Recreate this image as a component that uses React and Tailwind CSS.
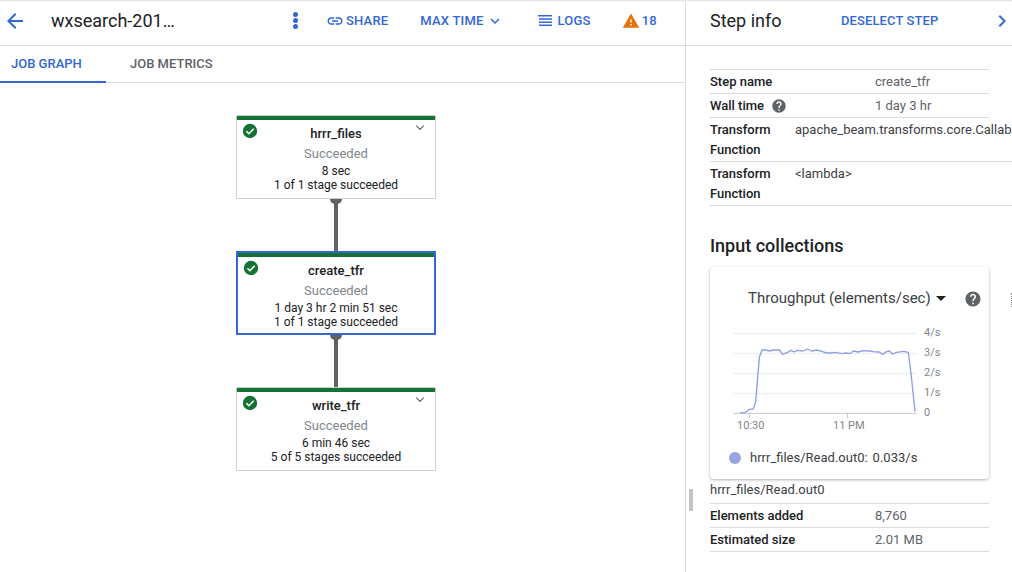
// src/App.jsx
import React from "react";

const roboto = { fontFamily: "Roboto, sans-serif" };

const chartPoints =
  "90,279 105,278 118,268 130,267 137,245 148,112 156,90 168,90 180,93 190,90 208,90 218,103 232,97 243,91 252,96 262,91 278,93 293,87 305,93 320,90 335,94 350,99 362,99 375,97 395,101 407,99 420,101 430,93 445,96 460,92 480,93 490,95 508,96 518,103 530,95 538,93 548,102 560,97 580,94 595,97 603,160 615,275";

function CheckBadge() {
  return (
    <svg width="16" height="16" viewBox="0 0 16 16" className="block">
      <circle cx="8" cy="8" r="7.2" fill="#137333" />
      <path d="M4.4 8.2l2.5 2.5 4.8-4.9" fill="none" stroke="#fff" strokeWidth="1.6" />
    </svg>
  );
}

function HelpIcon({ size = 16 }) {
  return (
    <svg width={size} height={size} viewBox="0 0 24 24" className="block">
      <path
        fill="#5f6368"
        d="M12 2C6.48 2 2 6.48 2 12s4.48 10 10 10 10-4.48 10-10S17.52 2 12 2zm1 17h-2v-2h2v2zm2.07-7.75l-.9.92C13.45 12.9 13 13.5 13 15h-2v-.5c0-1.1.45-2.1 1.17-2.83l1.24-1.26c.37-.36.59-.86.59-1.41 0-1.1-.9-2-2-2s-2 .9-2 2H8c0-2.21 1.79-4 4-4s4 1.79 4 4c0 .88-.36 1.68-.93 2.25z"
      />
    </svg>
  );
}

// nodes of the job graph, placed on the canvas
function GraphNode({ name, duration, stages, top, selected, chevron }) {
  return (
    <div
      className={`absolute left-[236px] w-[200px] h-[84px] bg-white ${
        selected ? "border-2 border-[#3367d6]" : "border border-[#cfcfcf]"
      }`}
      style={{ top }}
    >
      <div className="absolute left-0 right-0 top-0 h-[4px] bg-[#137333]" />
      <div className="absolute left-[5px] top-[7px]">
        <CheckBadge />
      </div>
      {chevron && (
        <svg width="12" height="12" viewBox="0 0 12 12" className="absolute right-[9px] top-[6px]">
          <path d="M2.2 3.6L6 7.4l3.8-3.8" fill="none" stroke="#5f6368" strokeWidth="1.2" />
        </svg>
      )}
      <div className="flex flex-col items-center text-center pt-[9px]">
        <div className="text-[13px] leading-[17px] font-medium text-[#202124]">{name}</div>
        <div className="text-[13px] leading-[17px] mt-[3px] text-[#80868b]">Succeeded</div>
        <div className="text-[12px] leading-[14px] mt-[2px] text-[#202124]">{duration}</div>
        <div className="text-[12px] leading-[14px] text-[#202124]">{stages}</div>
      </div>
    </div>
  );
}

function Connector({ top, height }) {
  return (
    <>
      <div className="absolute left-[334px] w-[4px] bg-[#616161]" style={{ top, height }} />
      <div className="absolute left-[330px] w-[12px] h-[5px] rounded-b-full bg-[#616161]" style={{ top }} />
    </>
  );
}

function InfoRow({ label, children, help }) {
  return (
    <div className="flex border-b border-[#dadce0] w-[279px] h-[24px] items-center text-[13px]">
      <div className="w-[165px] shrink-0 font-medium text-[#202124] whitespace-nowrap flex items-center gap-[7px]">
        {label}
        {help && <HelpIcon />}
      </div>
      <div className="text-[#5f6368]">{children}</div>
    </div>
  );
}

function TransformRow({ value }) {
  return (
    <div className="flex border-b border-[#dadce0] h-[44px] pt-[2px] text-[13px] leading-[20px] whitespace-nowrap">
      <div className="w-[85px] shrink-0 font-medium text-[#202124]">
        Transform
        <br />
        Function
      </div>
      <div className="text-[#3c4043]">{value}</div>
    </div>
  );
}

export default function App() {
  return (
    <div className="relative flex w-[1012px] h-[572px] overflow-hidden bg-white" style={roboto}>
      {/* Left: header, tabs and graph */}
      <div className="flex flex-col w-[686px] h-full border-r border-[#dadce0]">
        <div className="flex items-center h-[46px] pb-[4px] border-b border-[#dadce0] shrink-0">
          <svg width="24" height="24" viewBox="0 0 24 24" className="ml-[3px]">
            <path d="M20 11H7.83l5.59-5.59L12 4l-8 8 8 8 1.41-1.41L7.83 13H20v-2z" fill="#3367d6" />
          </svg>
          <div className="ml-[24px] w-[130px] text-[18px] text-[#202124] whitespace-nowrap">wxsearch-201…</div>
          <div className="ml-[112px] flex flex-col gap-[1px]">
            <span className="block w-[5px] h-[5px] rounded-full bg-[#3367d6]" />
            <span className="block w-[5px] h-[5px] rounded-full bg-[#3367d6]" />
            <span className="block w-[5px] h-[5px] rounded-full bg-[#3367d6]" />
          </div>
          <div className="ml-[28px] flex items-center text-[13px] font-medium text-[#3367d6] tracking-[0.2px] whitespace-nowrap">
            <svg width="18" height="18" viewBox="0 0 24 24" className="mr-[2px]">
              <path
                fill="#3367d6"
                d="M3.9 12c0-1.71 1.39-3.1 3.1-3.1h4V7H7c-2.76 0-5 2.24-5 5s2.24 5 5 5h4v-1.9H7c-1.71 0-3.1-1.39-3.1-3.1zM8 13h8v-2H8v2zm9-6h-4v1.9h4c1.71 0 3.1 1.39 3.1 3.1s-1.39 3.1-3.1 3.1h-4V17h4c2.76 0 5-2.24 5-5s-2.24-5-5-5z"
              />
            </svg>
            SHARE
            <span className="ml-[32px]">MAX TIME</span>
            <svg width="18" height="18" viewBox="0 0 24 24" className="ml-[2px]">
              <path d="M7.41 8.59L12 13.17l4.59-4.58L18 10l-6 6-6-6z" fill="#3367d6" />
            </svg>
            <svg width="16" height="14" viewBox="0 0 16 14" className="ml-[33px] mr-[5px]">
              <path d="M1 1h14v1.5H1zM2 4.2h13v1.5H2zM2 7.4h13v1.5H2zM2 10.6h13v1.5H2z" fill="#3367d6" />
            </svg>
            LOGS
            <svg width="18" height="18" viewBox="0 0 24 24" className="ml-[31px] mr-[2px]">
              <path d="M1 21h22L12 2 1 21zm12-3h-2v-2h2v2zm0-4h-2v-4h2v4z" fill="#e8710a" />
            </svg>
            18
          </div>
        </div>
        <div className="flex h-[37px] border-b border-[#dadce0] shrink-0 text-[13px] font-medium">
          <div className="w-[106px] pl-[11px] pt-[8px] text-[#3367d6] border-b-2 border-[#3367d6] h-[37px]">JOB GRAPH</div>
          <div className="ml-[24px] pt-[8px] text-[#5f6368]">JOB METRICS</div>
        </div>
        <div className="flex-1" />
      </div>

      {/* Graph canvas */}
      <Connector top={199} height={52} />
      <Connector top={335} height={52} />
      <GraphNode name="hrrr_files" duration="8 sec" stages="1 of 1 stage succeeded" top={115} chevron />
      <GraphNode name="create_tfr" duration="1 day 3 hr 2 min 51 sec" stages="1 of 1 stage succeeded" top={251} selected />
      <GraphNode name="write_tfr" duration="6 min 46 sec" stages="5 of 5 stages succeeded" top={387} chevron />

      {/* Panel drag handle */}
      <div className="absolute left-[689px] top-[489px] w-[4px] h-[22px] bg-[#c4c4c4]" />

      {/* Right: step info */}
      <div className="flex-1 min-w-0 flex flex-col">
        <div className="flex items-center h-[46px] pb-[4px] border-b border-[#dadce0] shrink-0 pl-[24px] whitespace-nowrap">
          <div className="w-[131px] shrink-0 text-[18px] text-[#202124]">Step info</div>
          <div className="shrink-0 text-[13px] font-medium tracking-[0.1px] text-[#3367d6]">DESELECT STEP</div>
          <svg width="24" height="24" viewBox="0 0 24 24" className="ml-[52px] shrink-0">
            <path d="M8.59 16.59L13.17 12 8.59 7.41 10 6l6 6-6 6z" fill="#3367d6" />
          </svg>
        </div>
        <div className="pl-[24px] pt-[23px]">
          <div className="border-t border-[#dadce0] w-[279px]" />
          <InfoRow label="Step name">create_tfr</InfoRow>
          <InfoRow label="Wall time" help>
            1 day 3 hr
          </InfoRow>
          <TransformRow value="apache_beam.transforms.core.Callab" />
          <TransformRow value="<lambda>" />
          <div className="mt-[29px] text-[18px] leading-[22px] font-medium text-[#202124]">Input collections</div>

          {/* Chart card */}
          <div className="relative mt-[10px] w-[279px] h-[212px] rounded-[4px] bg-white shadow-[0_1px_3px_rgba(60,64,67,0.4)]">
            <div className="flex items-center pl-[38px] pt-[21px] text-[15px] leading-[20px] text-[#3c4043] whitespace-nowrap">
              Throughput (elements/sec)
              <span className="ml-[5px] w-0 h-0 border-x-[5px] border-x-transparent border-t-[5px] border-t-[#202124]" />
              <span className="ml-[18px] mt-[2px]">
                <HelpIcon size={18} />
              </span>
            </div>
            <svg width="240" height="110" viewBox="0 0 720 330" className="absolute left-0 top-[53px]">
              {[40, 100, 160, 220].map((y) => (
                <line key={y} x1="70" x2="620" y1={y} y2={y} stroke="#e8eaed" strokeWidth="3" />
              ))}
              <line x1="70" x2="620" y1="280" y2="280" stroke="#c4c7cc" strokeWidth="3" />
              <line x1="118" x2="118" y1="280" y2="295" stroke="#c4c7cc" strokeWidth="3" />
              <line x1="412" x2="412" y1="280" y2="295" stroke="#c4c7cc" strokeWidth="3" />
              <polyline points={chartPoints} fill="none" stroke="#8f9fe3" strokeWidth="4" strokeLinejoin="round" />
            </svg>
            {[
              ["4/s", 59],
              ["3/s", 79],
              ["2/s", 99],
              ["1/s", 119],
              ["0", 139],
            ].map(([label, top]) => (
              <span key={label} className="absolute left-[214px] text-[11px] leading-[14px] text-[#80868b]" style={{ top }}>
                {label}
              </span>
            ))}
            <span className="absolute left-[27px] top-[152px] text-[11px] leading-[14px] text-[#80868b]">10:30</span>
            <span className="absolute left-[123px] top-[152px] text-[11px] leading-[14px] text-[#80868b]">11 PM</span>
            <div className="absolute left-[19px] top-[181px] flex items-center text-[13px] leading-[20px] text-[#3c4043] whitespace-nowrap">
              <span className="w-[12px] h-[12px] rounded-full bg-[#98a5e0]" />
              <span className="ml-[9px]">hrrr_files/Read.out0:</span>
              <span className="ml-[5px]">0.033/s</span>
            </div>
          </div>
          <div className="absolute left-[1011px] top-[293px] w-[1px] h-[14px] border-l border-dotted border-[#80868b]" />

          <div className="w-[279px] h-[25px] pb-[2px] flex items-center border-b border-[#dadce0] text-[13px] text-[#3c4043]">
            hrrr_files/Read.out0
          </div>
          <InfoRow label="Elements added">8,760</InfoRow>
          <InfoRow label="Estimated size">2.01 MB</InfoRow>
        </div>
      </div>

      {/* Top edge shadow */}
      <div className="absolute left-0 right-0 top-0 h-[2px] bg-gradient-to-b from-[#dedede] to-white" />
    </div>
  );
}
